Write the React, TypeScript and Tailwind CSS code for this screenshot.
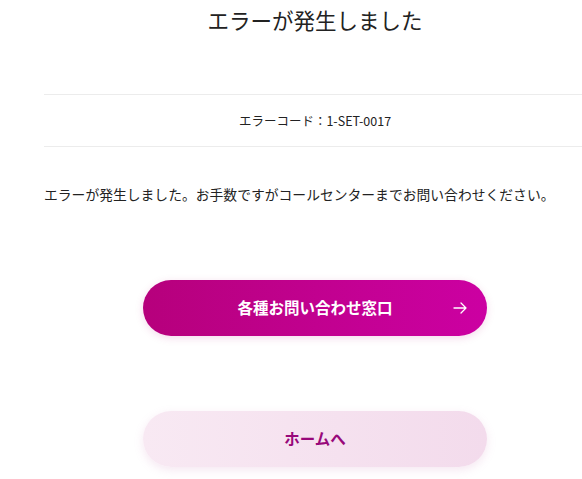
import React from 'react';

const jp = "font-['Meiryo','Noto_Sans_CJK_JP','Noto_Sans',sans-serif]";

const ArrowRight = () => (
  <svg width="16" height="16" viewBox="0 0 16 16" fill="none" stroke="currentColor" strokeWidth="1.3" strokeLinecap="round" strokeLinejoin="round">
    <path d="M2 8h12M9 3l5 5-5 5" />
  </svg>
);

export default function ErrorPage() {
  return (
    <div className={`min-h-screen w-[582px] overflow-hidden bg-white text-[#222] ${jp}`}>
      <div className="ml-[44px] w-[542px]">
        {/* Title */}
        <h1 className="pt-[7px] text-center text-[21.5px] leading-[26px] font-normal text-[#222]">エラーが発生しました</h1>

        {/* Error code */}
        <div className="mt-[61px] border-y border-[#ececec] py-[17px] text-center text-[12.5px] leading-[17px] text-[#222]">
          エラーコード：1-SET-0017
        </div>

        {/* Message */}
        <p className="mt-[37px] text-[13.8px] leading-[20px] whitespace-nowrap">
          エラーが発生しました。お手数ですがコールセンターまでお問い合わせください。
        </p>

        {/* Buttons */}
        <div className="mt-[76px] flex flex-col items-center gap-[75px]">
          <button className="relative flex h-[56px] w-[344px] items-center justify-center rounded-full bg-gradient-to-r from-[#b6007c] to-[#cc00a2] text-[15.5px] font-bold text-white shadow-[0_2px_8px_rgba(180,0,120,0.15)]">
            各種お問い合わせ窓口
            <span className="absolute right-[19px] top-1/2 -translate-y-1/2 text-white">
              <ArrowRight />
            </span>
          </button>
          <button className="flex h-[56px] w-[344px] items-center justify-center rounded-full bg-gradient-to-r from-[#f8e9f3] to-[#f3dbec] text-[15.5px] font-bold text-[#98087a] shadow-[0_3px_10px_rgba(200,120,180,0.18)]">
            ホームへ
          </button>
        </div>
      </div>
    </div>
  );
}
